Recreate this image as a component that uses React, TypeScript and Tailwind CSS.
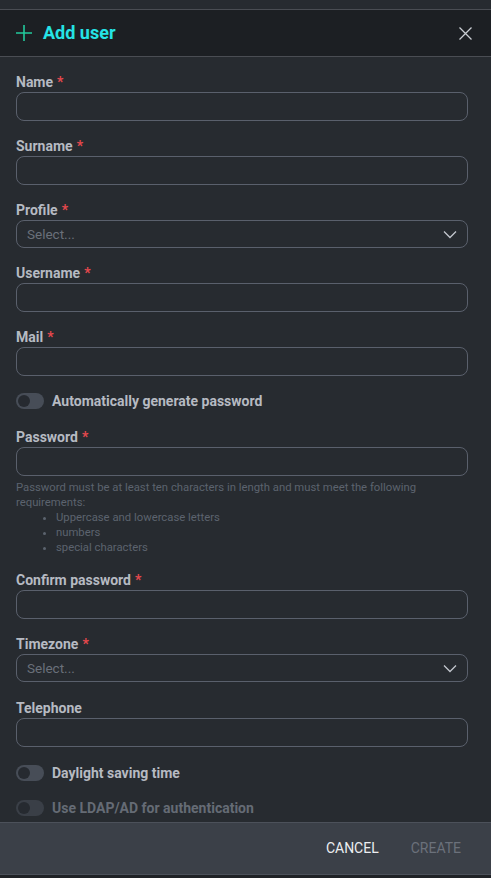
import React from "react";

function Label({ text, required = true }: { text: string; required?: boolean }) {
  return (
    <div className="pt-[1px] text-[14px] leading-[16px] font-bold text-[#b6bac2]">
      {text}
      {required && <span className="text-[#e5484d] ml-[4px]">*</span>}
    </div>
  );
}

function Input() {
  return <div className="mt-[2px] h-[29px] rounded-[8px] border border-[#5a606c]" />;
}

function Select() {
  return (
    <div className="mt-[2px] h-[28px] rounded-[8px] border border-[#5a606c] flex items-center justify-between pl-[10px] pr-[10px]">
      <span className="text-[13.5px] text-[#6a707a]">Select...</span>
      <svg width="14" height="9" viewBox="0 0 14 9" fill="none">
        <path d="M1 1.5 L7 7.5 L13 1.5" stroke="#c2c6cd" strokeWidth="1.3" />
      </svg>
    </div>
  );
}

function Toggle({ text, disabled = false }: { text: string; disabled?: boolean }) {
  return (
    <div className="flex items-center h-[16px]">
      <div className={`w-[28px] h-[16px] rounded-full flex items-center px-[2px] ${disabled ? "bg-[#3a3f47]" : "bg-[#474d57]"}`}>
        <div className="w-[12px] h-[12px] rounded-full bg-[#262a30]" />
      </div>
      <span className={`ml-[8px] text-[14px] font-bold ${disabled ? "text-[#656b75]" : "text-[#b6bac2]"}`}>{text}</span>
    </div>
  );
}

export default function App() {
  return (
    <div className="w-[491px] h-[878px] bg-[#272b30] flex flex-col overflow-hidden" style={{ fontFamily: "Roboto, 'Liberation Sans', sans-serif" }}>
      <div className="h-[9px] shrink-0 bg-[#272b30]" />
      <div className="h-[48px] shrink-0 bg-[#1c1f23] border-y border-[#4a4d53] flex items-center justify-between pl-[16px] pr-[19px]">
        <div className="flex items-center">
          <svg width="16" height="16" viewBox="0 0 16 16" fill="none">
            <path d="M8 0 V16 M0 8 H16" stroke="#22c99c" strokeWidth="1.6" />
          </svg>
          <span className="ml-[11px] text-[18px] leading-[22px] font-bold text-[#25e3e6]">Add user</span>
        </div>
        <svg width="13" height="13" viewBox="0 0 13 13" fill="none">
          <path d="M0.5 0.5 L12.5 12.5 M12.5 0.5 L0.5 12.5" stroke="#c9cdd3" strokeWidth="1.3" />
        </svg>
      </div>
      <div className="flex-1 overflow-hidden px-[16px] pr-[23px] pt-[16px] flex flex-col">
        <Label text="Name" />
        <Input />
        <div className="mt-[16px]"><Label text="Surname" /></div>
        <Input />
        <div className="mt-[16px]"><Label text="Profile" /></div>
        <Select />
        <div className="mt-[16px]"><Label text="Username" /></div>
        <Input />
        <div className="mt-[16px]"><Label text="Mail" /></div>
        <Input />
        <div className="mt-[17px]"><Toggle text="Automatically generate password" /></div>
        <div className="mt-[19px]"><Label text="Password" /></div>
        <Input />
        <div className="mt-[4px] text-[11.3px] leading-[15px] text-[#5c636e]">
          <p className="pr-[20px]">Password must be at least ten characters in length and must meet the following requirements:</p>
          <ul className="list-disc pl-[40px]">
            <li>Uppercase and lowercase letters</li>
            <li>numbers</li>
            <li>special characters</li>
          </ul>
        </div>
        <div className="mt-[16px]"><Label text="Confirm password" /></div>
        <Input />
        <div className="mt-[16px]"><Label text="Timezone" /></div>
        <Select />
        <div className="mt-[17px]"><Label text="Telephone" required={false} /></div>
        <Input />
        <div className="mt-[18px]"><Toggle text="Daylight saving time" /></div>
        <div className="mt-[19px]"><Toggle text="Use LDAP/AD for authentication" disabled /></div>
      </div>
      <div className="h-[53px] shrink-0 bg-[#3b4048] border-y border-[#4c515a] flex items-center justify-end pr-[14px]">
        <button className="px-[16px] h-[36px] text-[14px] text-[#eceef1]">CANCEL</button>
        <button className="px-[16px] h-[36px] text-[14px] text-[#6b717b]">CREATE</button>
      </div>
      <div className="h-[3px] shrink-0 bg-[#1f2226]" />
    </div>
  );
}
